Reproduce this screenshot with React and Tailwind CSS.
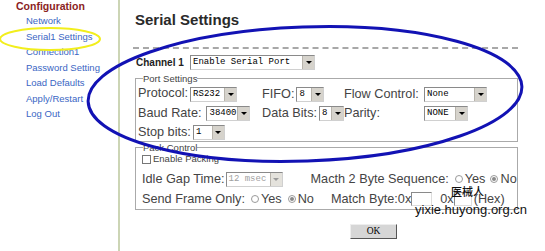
import React from "react";

const Arrow = ({ disabled }) => (
  <span
    className={`flex h-full w-[12px] shrink-0 items-center justify-center border-l border-[#b8b4ac] ${
      disabled ? "bg-[#e4e2dc]" : "bg-[#d6d3cc]"
    }`}
  >
    <span
      className={`h-0 w-0 border-x-[3px] border-t-[3px] border-x-transparent ${
        disabled ? "border-t-[#9a9a9a]" : "border-t-black"
      }`}
    />
  </span>
);

const Select = ({ width, text, disabled = false }) => (
  <span
    className={`inline-flex h-[15px] shrink-0 items-stretch border border-[#8a8a8a] border-r-[#d0d0d0] border-b-[#d0d0d0] bg-white ${width}`}
  >
    <span
      className={`flex-1 overflow-hidden whitespace-nowrap pl-[2px] font-['Liberation_Mono',monospace] text-[9px] leading-[13px] ${
        disabled ? "text-[#a0a0a0]" : "text-black"
      }`}
    >
      {text}
    </span>
    <Arrow disabled={disabled} />
  </span>
);

const Radio = ({ checked }) => (
  <span className="mr-[2px] inline-flex h-[8px] w-[8px] shrink-0 items-center justify-center rounded-full border border-[#9a9a9a] bg-white">
    {checked && <span className="h-[4px] w-[4px] rounded-full bg-[#8a8a8a]" />}
  </span>
);

const navLinks = [
  "Network",
  "Serial1 Settings",
  "Connection1",
  "Password Setting",
  "Load Defaults",
  "Apply/Restart",
  "Log Out",
];

export default function App() {
  return (
    <div className="relative flex h-[251px] w-[545px] overflow-hidden bg-white font-['Liberation_Sans',Arial,sans-serif] text-[#333]">
      {/* left menu */}
      <div className="h-full w-[120px] shrink-0 border-r-2 border-[#ccd5b5] pl-[16px]">
        <div className="text-[10.5px] font-bold leading-[13px] text-[#8b2222]">Configuration</div>
        <ul className="ml-[10px] text-[9.5px] leading-[15.5px] text-[#3a66c4]">
          {navLinks.map((l) => (
            <li key={l} className="whitespace-nowrap">
              {l}
            </li>
          ))}
        </ul>
      </div>

      {/* main */}
      <div className="w-[425px] pl-[15px] pr-[27px] pt-[10px]">
        <h1 className="h-[20px] text-[15px] font-bold leading-[20px] text-[#2a2a2a]">Serial Settings</h1>
        <div className="-ml-[2px] mt-[17px] border-t-2 border-dashed border-[#a8a8a8]" />

        <div className="mt-[6px] flex h-[15px] items-center">
          <span className="w-[55px] pl-[1px] text-[10px] font-bold text-[#222]">Channel 1</span>
          <Select width="w-[125px]" text="Enable Serial Port" />
        </div>

        {/* port settings */}
        <fieldset className="mt-[2px] border border-[#aaa] px-[2px] text-[12.7px] text-[#444]">
          <legend className="ml-[5px] text-[9.5px] leading-[13px] text-[#444]">Port Settings</legend>
          <div className="grid grid-cols-[124px_82px_80px_1fr] whitespace-nowrap">
            <div className="flex h-[18px] items-center">
              <span className="mr-[2px]">Protocol:</span>
              <Select width="w-[47px]" text="RS232" />
            </div>
            <div className="flex items-center">
              <span className="mr-[2px]">FIFO:</span>
              <Select width="w-[28px]" text="8" />
            </div>
            <div className="flex items-center">Flow Control:</div>
            <div className="flex items-center">
              <Select width="w-[63px]" text="None" />
            </div>

            <div className="flex h-[18px] items-center">
              <span className="mr-[5px]">Baud Rate:</span>
              <Select width="w-[44px]" text="38400" />
            </div>
            <div className="flex items-center">
              <span className="mr-[2px]">Data Bits:</span>
              <Select width="w-[25px]" text="8" />
            </div>
            <div className="flex items-center">Parity:</div>
            <div className="flex items-center">
              <Select width="w-[44px]" text="NONE" />
            </div>

            <div className="flex h-[18px] items-center">
              <span className="mr-[2px]">Stop bits:</span>
              <Select width="w-[32px]" text="1" />
            </div>
          </div>
        </fieldset>

        {/* pack control */}
        <fieldset className="border border-[#aaa] pl-[6px] text-[12.7px] text-[#444]">
          <legend className="ml-[1px] text-[9.5px] leading-[11px] text-[#444]">Pack Control</legend>
          <div className="flex h-[12px] items-center text-[9.5px]">
            <span className="mr-[1px] inline-block h-[9px] w-[9px] border border-[#777] bg-white" />
            <span className="ml-[1px]">Enable Packing</span>
          </div>
          <div className="flex h-[24px] items-center whitespace-nowrap pt-[4px]">
            <span className="mr-[1px]">Idle Gap Time:</span>
            <Select width="w-[57px]" text="12 msec" disabled />
            <span className="ml-[28px]">Macth 2 Byte Sequence:</span>
            <span className="ml-[6px] flex items-center">
              <Radio />
              Yes
            </span>
            <span className="ml-[5px] flex items-center">
              <Radio checked />
              No
            </span>
          </div>
          <div className="flex h-[20px] items-center whitespace-nowrap">
            <span>Send Frame Only:</span>
            <span className="ml-[6px] flex items-center">
              <Radio />
              Yes
            </span>
            <span className="ml-[6px] flex items-center">
              <Radio checked />
              No
            </span>
            <span className="ml-[17px]">Match Byte:0x</span>
            <span className="inline-block h-[14px] w-[21px] shrink-0 border border-[#8a8a8a] border-r-[#ddd] border-b-[#ddd] bg-white" />
            <span className="ml-[8px]">0x</span>
            <span className="inline-block h-[14px] w-[18px] shrink-0 border border-[#8a8a8a] border-r-[#ddd] border-b-[#ddd] bg-white" />
            <span className="ml-[2px]">(Hex)</span>
          </div>
        </fieldset>

        <button className="ml-[215px] mt-[14px] flex h-[15px] w-[47px] items-center justify-center border border-[#eee] border-r-[#555] border-b-[#555] bg-[#d6d6d6] font-['Liberation_Serif',serif] text-[9.5px] text-black">
          OK
        </button>
      </div>

      {/* watermark */}
      <div className="absolute left-[451px] top-[184px] font-['Noto_Sans_CJK_SC',sans-serif] text-[11px] font-medium leading-[14px] text-[#111]">
        医械人
      </div>
      <div className="absolute left-[415px] top-[202px] text-[13px] leading-[15px] text-[#111]">
        yixie.huyong.org.cn
      </div>

      {/* annotations */}
      <svg className="pointer-events-none absolute left-0 top-0" width="545" height="251">
        <ellipse cx="50" cy="39" rx="50" ry="11" fill="none" stroke="#f2ee1c" strokeWidth="2" />
        <ellipse
          cx="305"
          cy="94"
          rx="217"
          ry="67"
          fill="none"
          stroke="#1212b4"
          strokeWidth="3"
          transform="rotate(-2 305 94)"
        />
      </svg>
    </div>
  );
}
